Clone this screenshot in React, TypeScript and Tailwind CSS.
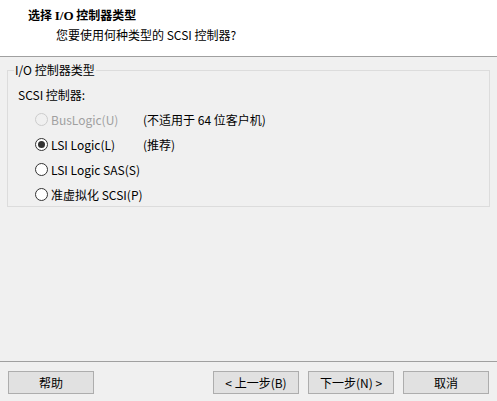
import React from 'react';

const font = { fontFamily: '"Noto Sans CJK SC", "Liberation Sans", sans-serif' };

interface RadioProps {
  label: string;
  note?: string;
  checked?: boolean;
  disabled?: boolean;
}

const Radio: React.FC<RadioProps> = ({ label, note, checked, disabled }) => (
  <div className="flex items-center h-[25px]">
    <span
      className={`w-[13px] h-[13px] rounded-full border flex items-center justify-center ${
        disabled ? 'border-[#cccccc] bg-[#f0f0f0]' : 'border-[#333333] bg-white'
      }`}
    >
      {checked && <span className="w-[7px] h-[7px] rounded-full bg-[#333333]" />}
    </span>
    <span className={`ml-[3px] w-[92px] ${disabled ? 'text-[#a0a0a0]' : 'text-black'}`}>{label}</span>
    {note && <span className="text-black">{note}</span>}
  </div>
);

const Button: React.FC<{ children: React.ReactNode }> = ({ children }) => (
  <button className="w-[86px] h-[23px] border border-[#adadad] bg-[#e1e1e1] text-[12px] text-black flex items-center justify-center leading-none">
    {children}
  </button>
);

export default function App() {
  return (
    <div className="w-[497px] h-[401px] bg-[#f0f0f0] flex flex-col text-[12px] leading-[16px] text-black" style={font}>
      <div className="h-[57px] bg-white border-b border-[#a0a0a0] pl-[28px] pt-[7px]">
        <div className="font-bold text-[12px] leading-[16px]">
          选择 <span style={{ fontFamily: '"Liberation Serif", serif' }} className="text-[13px]">I/O</span> 控制器类型
        </div>
        <div className="pl-[28px] mt-[3px]">您要使用何种类型的 SCSI 控制器?</div>
      </div>

      <div className="flex-1 px-[7px] pt-[5px]">
        <fieldset className="border border-[#dcdcdc] h-[145px] pl-[10px] pr-2">
          <legend className="px-[1px] ml-[-4px] leading-[16px]">I/O 控制器类型</legend>
          <div className="mt-[9px]">SCSI 控制器:</div>
          <div className="mt-[4px] pl-[17px] flex flex-col">
            <Radio label="BusLogic(U)" note="(不适用于 64 位客户机)" disabled />
            <Radio label="LSI Logic(L)" note="(推荐)" checked />
            <Radio label="LSI Logic SAS(S)" />
            <Radio label="准虚拟化 SCSI(P)" />
          </div>
        </fieldset>
      </div>

      <div className="h-[40px] border-t border-[#a0a0a0] flex items-start pt-[9px] px-[8px]">
        <Button>帮助</Button>
        <div className="ml-auto flex">
          <Button>&lt; 上一步(B)</Button>
          <div className="ml-[9px]">
            <Button>下一步(N) &gt;</Button>
          </div>
          <div className="ml-[9px]">
            <Button>取消</Button>
          </div>
        </div>
      </div>
    </div>
  );
}
